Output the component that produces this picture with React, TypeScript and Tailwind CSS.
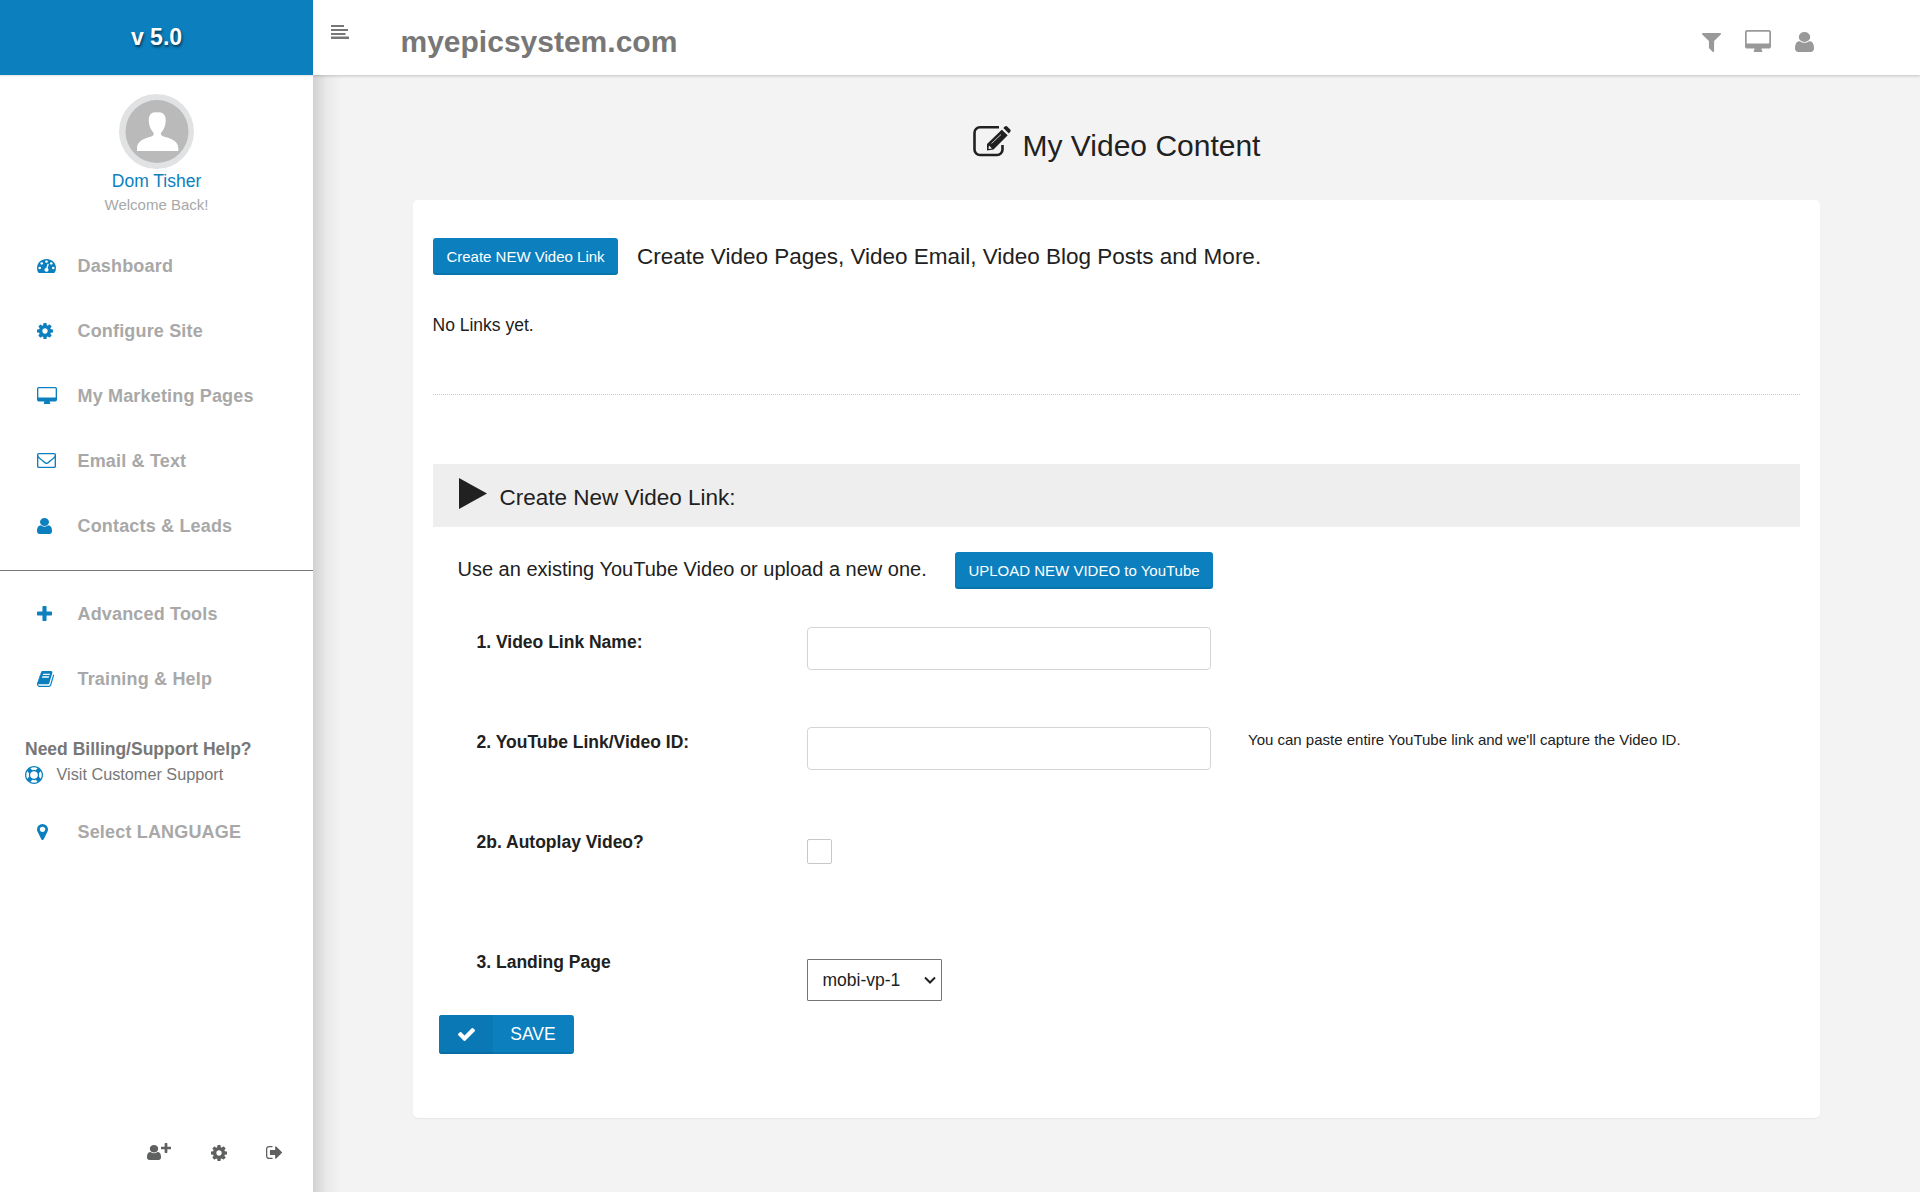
import React from "react";

const ICONS = {
  user: "M1536 1399q0 109-62.5 187t-150.5 78h-854q-88 0-150.5-78t-62.5-187q0-85 8.5-160.5t31.5-152 58.5-131 94-89 134.5-34.5q131 128 313 128t313-128q76 0 134.5 34.5t94 89 58.5 131 31.5 152 8.5 160.5zm-256-887q0 159-112.5 271.5t-271.5 112.5-271.5-112.5-112.5-271.5 112.5-271.5 271.5-112.5 271.5 112.5 112.5 271.5z",
  cog: "M1152 896q0-106-75-181t-181-75-181 75-75 181 75 181 181 75 181-75 75-181zm512-109v222q0 12-8 23t-20 13l-185 28q-19 54-39 91 35 50 107 138 10 12 10 25t-9 23q-27 37-99 108t-94 71q-12 0-26-9l-138-108q-44 23-91 38-16 136-29 186-7 28-36 28h-222q-14 0-24.5-8.5t-11.5-21.5l-28-184q-49-16-90-37l-141 107q-10 9-25 9-14 0-25-11-126-114-165-168-7-10-7-23 0-12 8-23 15-21 51-66.5t54-70.5q-27-50-41-99l-183-27q-13-2-21-12.5t-8-23.5v-222q0-12 8-23t19-13l186-28q14-46 39-92-40-57-107-138-10-12-10-24 0-10 9-23 26-36 98.5-107.5t94.5-71.5q13 0 26 10l138 107q44-23 91-38 16-136 29-186 7-28 36-28h222q14 0 24.5 8.5t11.5 21.5l28 184q49 16 90 37l142-107q9-9 24-9 13 0 25 10 129 119 165 170 7 8 7 22 0 12-8 23-15 21-51 66.5t-54 70.5q26 50 41 98l183 28q13 2 21 12.5t8 23.5z",
  desktop: "M1792 992v-832q0-13-9.5-22.5t-22.5-9.5h-1600q-13 0-22.5 9.5t-9.5 22.5v832q0 13 9.5 22.5t22.5 9.5h1600q13 0 22.5-9.5t9.5-22.5zm128-832v1088q0 66-47 113t-113 47h-544q0 37 16 77.5t32 71 16 43.5q0 26-19 45t-45 19h-512q-26 0-45-19t-19-45q0-14 16-44t32-70 16-78h-544q-66 0-113-47t-47-113v-1088q0-66 47-113t113-47h1600q66 0 113 47t47 113z",
  plus: "M1600 736v192q0 40-28 68t-68 28h-416v416q0 40-28 68t-68 28h-192q-40 0-68-28t-28-68v-416h-416q-40 0-68-28t-28-68v-192q0-40 28-68t68-28h416v-416q0-40 28-68t68-28h192q40 0 68 28t28 68v416h416q40 0 68 28t28 68z",
  marker: "M1152 640q0-106-75-181t-181-75-181 75-75 181 75 181 181 75 181-75 75-181zm256 0q0 109-33 179l-364 774q-16 33-47.5 52t-67.5 19-67.5-19-46.5-52l-365-774q-33-70-33-179 0-212 150-362t362-150 362 150 150 362z",
  filter: "M1595 295q17 41-14 70l-493 493v742q0 42-39 59-13 5-25 5-27 0-45-19l-256-256q-19-19-19-45v-486l-493-493q-31-29-14-70 17-39 59-39h1280q42 0 59 39z",
  check: "M1671 566q0 40-28 68l-724 724-136 136q-28 28-68 28t-68-28l-136-136-362-362q-28-28-28-68t28-68l136-136q28-28 68-28t68 28l294 295 656-657q28-28 68-28t68 28l136 136q28 28 28 68z",
  signOut: "M704 1440q0 4 1 20t.5 26.5-3 23.5-10 19.5-20.5 6.5h-320q-119 0-203.5-84.5t-84.5-203.5v-704q0-119 84.5-203.5t203.5-84.5h320q13 0 22.5 9.5t9.5 22.5q0 4 1 20t.5 26.5-3 23.5-10 19.5-20.5 6.5h-320q-66 0-113 47t-47 113v704q0 66 47 113t113 47h312l11.5 1 11.5 3 8 5.5 7 9 2 13.5zm928-544q0 26-19 45l-544 544q-19 19-45 19t-45-19-19-45v-288h-448q-26 0-45-19t-19-45v-384q0-26 19-45t45-19h448v-288q0-26 19-45t45-19 45 19l544 544q19 19 19 45z",
  envelope: "M1664 1504v-768q-32 36-69 66-268 206-426 338-51 43-83 67t-86.5 48.5-102.5 24.5h-2q-48 0-102.5-24.5t-86.5-48.5-83-67q-158-132-426-338-37-30-69-66v768q0 13 9.5 22.5t22.5 9.5h1472q13 0 22.5-9.5t9.5-22.5zm0-1051v-24.5l-.5-13-3-12.5-5.5-9-9-7.5-14-2.5h-1472q-13 0-22.5 9.5t-9.5 22.5q0 168 147 284 193 152 401 317 6 5 35 29.5t46 37.5 44.5 31.5 50.5 27.5 43 9h2q20 0 43-9t50.5-27.5 44.5-31.5 46-37.5 35-29.5q208-165 401-317 54-43 100.5-115.5t46.5-131.5zm128-37v1088q0 66-47 113t-113 47h-1472q-66 0-113-47t-47-113v-1088q0-66 47-113t113-47h1472q66 0 113 47t47 113z",
  gauge: "M384 1152q0-53-37.5-90.5t-90.5-37.5-90.5 37.5-37.5 90.5 37.5 90.5 90.5 37.5 90.5-37.5 37.5-90.5zm192-448q0-53-37.5-90.5t-90.5-37.5-90.5 37.5-37.5 90.5 37.5 90.5 90.5 37.5 90.5-37.5 37.5-90.5zm428 481l101-382q6-26-7.5-48.5t-38.5-29.5-48 6.5-30 39.5l-101 382q-60 5-107 43.5t-63 98.5q-20 77 20 146t117 89 146-20 89-117q16-60-6-117t-72-91zm660-33q0-53-37.5-90.5t-90.5-37.5-90.5 37.5-37.5 90.5 37.5 90.5 90.5 37.5 90.5-37.5 37.5-90.5zm-640-640q0-53-37.5-90.5t-90.5-37.5-90.5 37.5-37.5 90.5 37.5 90.5 90.5 37.5 90.5-37.5 37.5-90.5zm448 192q0-53-37.5-90.5t-90.5-37.5-90.5 37.5-37.5 90.5 37.5 90.5 90.5 37.5 90.5-37.5 37.5-90.5zm320 448q0 261-141 483-19 29-54 29h-1402q-35 0-54-29-141-221-141-483 0-182 71-348t191-286 286-191 348-71 348 71 286 191 191 286 71 348z",
  book: "M1703 478q40 57 18 129l-275 906q-19 64-76.5 107.5t-122.5 43.5h-923q-77 0-148.5-53.5t-99.5-131.5q-24-67-2-127 0-4 3-27t4-37q1-8-3-21.5t-3-19.5q2-11 8-21t16.5-23.5 16.5-23.5q23-38 45-91.5t30-91.5q3-10 .5-30t-.5-28q3-11 17-28t17-23q21-36 42-92t25-90q1-9-2.5-32t.5-28q4-13 22-30.5t22-22.5q19-26 42.5-84.5t27.5-96.5q1-8-3-25.5t-2-26.5q2-8 9-18t18-23 17-21q8-12 16.5-30.5t15-35 16-36 19.5-32 26.5-23.5 36-11.5 47.5 5.5l-1 3q38-9 51-9h761q74 0 114 56t18 130l-274 906q-36 119-71.5 153.5t-128.5 34.5h-869q-27 0-38 15-11 16-1 43 24 70 144 70h923q29 0 56-15.5t35-41.5l300-987q7-22 5-57 38 15 59 43zm-1064 2q-4 13 2 22.5t20 9.5h608q13 0 25.5-9.5t16.5-22.5l21-64q4-13-2-22.5t-20-9.5h-608q-13 0-25.5 9.5t-16.5 22.5zm-83 256q-4 13 2 22.5t20 9.5h608q13 0 25.5-9.5t16.5-22.5l21-64q4-13-2-22.5t-20-9.5h-608q-13 0-25.5 9.5t-16.5 22.5z",
  lifeRing: "M896 0q182 0 348 71t286 191 191 286 71 348-71 348-191 286-286 191-348 71-348-71-286-191-191-286-71-348 71-348 191-286 286-191 348-71zm0 128q-190 0-361 90l194 194q82-28 167-28t167 28l194-194q-171-90-361-90zm-678 1129l194-194q-28-82-28-167t28-167l-194-194q-90 171-90 361t90 361zm678 407q190 0 361-90l-194-194q-82 28-167 28t-167-28l-194 194q171 90 361 90zm0-384q159 0 271.5-112.5t112.5-271.5-112.5-271.5-271.5-112.5-271.5 112.5-112.5 271.5 112.5 271.5 271.5 112.5zm484-217l194 194q90-171 90-361t-90-361l-194 194q28 82 28 167t-28 167z",
};

/* Each view box is cropped to the glyph, so the class sizes are the drawn sizes. */
const BOXES: Record<keyof typeof ICONS, string> = {
  user: "256 128 1280 1536",
  cog: "128 128 1536 1536",
  desktop: "0 0 1920 1664",
  plus: "192 128 1408 1408",
  marker: "384 128 1024 1536",
  filter: "192 256 1408 1408",
  check: "121 334 1550 1188",
  signOut: "64 256 1568 1280",
  envelope: "0 256 1792 1408",
  gauge: "0 256 1792 1408",
  book: "64 128 1664 1536",
  lifeRing: "0 0 1792 1792",
};

function Icon({ name, className }: { name: keyof typeof ICONS; className: string }) {
  return (
    <svg viewBox={BOXES[name]} preserveAspectRatio="none" fill="currentColor" className={`shrink-0 ${className}`}>
      <path d={ICONS[name]} />
    </svg>
  );
}

function NavItem({ name, size, label }: { name: keyof typeof ICONS; size: string; label: string }) {
  return (
    <a className="flex h-[65px] items-center pl-[37px]">
      <span className="flex w-[40.500px] items-center text-[#0c80bf]">
        <Icon name={name} className={size} />
      </span>
      <span className="pt-[2px] text-[18px] font-bold tracking-[0.17px] text-[#a8a8a8]">{label}</span>
    </a>
  );
}

function Sidebar() {
  return (
    <aside className="relative z-20 flex w-[313px] shrink-0 flex-col bg-white">
      <div className="flex h-[75px] shrink-0 items-center justify-center bg-[#0c80bf] text-[23px] font-bold text-white [text-shadow:1px_2px_3px_rgba(0,0,0,0.6)]">
        v 5.0
      </div>
      <div className="flex h-[158px] flex-col items-center pt-[19px] shadow-[inset_0_2px_2px_-1px_rgba(0,0,0,0.12)]">
        <svg viewBox="0 0 75 75" className="size-[75px]">
          <circle cx="37.5" cy="37.5" r="37.5" fill="#e0e2e4" />
          <circle cx="38" cy="37.5" r="31.5" fill="#bababa" />
          <path
            d="M38 18.500c5.500-.8 8.700 2 8.700 8 0 5-1.700 9-4.400 12-1.200 2 0 3.200 3 4.200 8 1.800 14 5 14 11.500V57H18v-2.800c0-6.500 6-9.700 13.500-11.500 3-1 4-2.200 2.800-4.200-2.700-3-4.500-7-4.500-12 0-6 3-8.800 8.200-8z"
            fill="#fff"
          />
        </svg>
        <div className="text-[17.500px] leading-[24px] text-[#0c80bf]">Dom Tisher</div>
        <div className="text-[15px] leading-[24px] text-[#a8a8a8]">Welcome Back!</div>
      </div>
      <nav className="flex h-[338px] flex-col border-b border-[#777]">
        <NavItem name="gauge" size="h-[14px] w-[19px]" label="Dashboard" />
        <NavItem name="cog" size="size-4" label="Configure Site" />
        <NavItem name="desktop" size="h-[17px] w-5" label="My Marketing Pages" />
        <NavItem name="envelope" size="h-[15px] w-[19px]" label="Email & Text" />
        <NavItem name="user" size="h-4 w-[15px]" label="Contacts & Leads" />
      </nav>
      <nav className="mt-[10px] flex flex-col">
        <NavItem name="plus" size="size-[15px]" label="Advanced Tools" />
        <NavItem name="book" size="h-4 w-[17px]" label="Training & Help" />
      </nav>
      <div className="mt-[25px] pl-[25px] text-[#777]">
        <div className="text-[17.500px] leading-[26px] font-bold">Need Billing/Support Help?</div>
        <div className="flex h-[26px] items-center leading-[24px]">
          <Icon name="lifeRing" className="size-[18px] text-[#0c80bf]" />
          <span className="ml-[13.500px] pb-[2px] text-[16.250px]">Visit Customer Support</span>
        </div>
      </div>
      <div className="mt-[11px]">
        <NavItem name="marker" size="h-4 w-[11px]" label="Select LANGUAGE" />
      </div>
      <div className="mt-auto flex h-[50px] shrink-0 items-start pl-[147px] text-[#5f6060]">
        <span className="flex w-16 items-start">
          <Icon name="user" className="mt-[3px] h-[15px] w-[14px]" />
          <Icon name="plus" className="mt-px size-[10px]" />
        </span>
        <span className="w-[55px] pt-[3px]">
          <Icon name="cog" className="size-4" />
        </span>
        <Icon name="signOut" className="mt-1 h-[13px] w-4" />
      </div>
    </aside>
  );
}

function TopBar() {
  return (
    <header className="relative z-10 flex h-[75px] shrink-0 bg-white shadow-[0_1px_3px_rgba(0,0,0,0.2)]">
      <svg viewBox="0 0 18 15" fill="#777" className="mt-[24px] ml-[18px] h-[15px] w-[18px]">
        <rect y="1" width="13" height="2" />
        <rect y="5" width="17" height="2" />
        <rect y="9" width="14.500" height="2" />
        <rect y="12.500" width="18" height="2.500" />
      </svg>
      <h1 className="mt-[22px] ml-[51.500px] text-[30px] leading-[40px] font-bold text-[#777]">myepicsystem.com</h1>
      <div className="mr-[106px] ml-auto flex text-[#999]">
        <Icon name="filter" className="mt-[33px] h-[19px] w-[19px]" />
        <Icon name="desktop" className="mt-[30px] ml-[24px] h-[22px] w-[26px]" />
        <Icon name="user" className="mt-[32px] ml-[24px] h-5 w-[19px]" />
      </div>
    </header>
  );
}

const button = "flex items-center justify-center rounded-[3px] bg-[#0c80bf] text-white shadow-[inset_0_-2px_0_rgba(0,0,0,0.09)]";

function FormRow({ label, height, children }: { label: string; height: string; children: React.ReactNode }) {
  return (
    <div className={`flex items-start pl-[43.500px] ${height}`}>
      <label className="w-[330.500px] shrink-0 pt-[3px] text-[17.500px] leading-[24px] font-bold">{label}</label>
      {children}
    </div>
  );
}

export default function App() {
  return (
    <div className="flex h-[1192px] w-[1920px] overflow-hidden bg-[#f3f3f3] font-['Liberation_Sans',Arial,sans-serif] text-[#212121]">
      <Sidebar />
      <div className="relative flex min-w-0 flex-1 flex-col">
        <TopBar />
        <div className="absolute top-[75px] bottom-0 left-0 w-7 bg-linear-to-r from-black/14 via-black/4 to-transparent" />
        <main className="pr-[100px] pl-[100px]">
          <div className="flex h-[125px] justify-center">
            <svg viewBox="0 0 38 32" className="mt-[50px] h-8 w-[38px]" fill="none" stroke="currentColor">
              <path d="M26 2.200H7a5.500 5.500 0 0 0-5.500 5.500v16.800a5.500 5.500 0 0 0 5.500 5.500h17a5.500 5.500 0 0 0 5.500-5.500V20" strokeWidth="2.600" />
              <path d="M14 25.500V19L29 4.500l6 5.500L20.500 24.500z" fill="currentColor" stroke="none" />
              <path d="M30.300 3l1.500-1.500q1.200-1 2.400 0l3 3q1 1.200 0 2.300L35.800 8.500z" fill="currentColor" stroke="none" />
              <path d="M28.800 3.700L35.600 10.200" stroke="#f3f3f3" strokeWidth="1.200" />
              <path d="M18.500 18.500L28 9.500" stroke="#f3f3f3" strokeWidth=".8" />
              <path d="M16 20.500l3 3-3.500.5z" fill="#f3f3f3" stroke="none" />
            </svg>
            <h2 className="mt-[51px] ml-3 text-[30px] leading-[40px]">My Video Content</h2>
          </div>
          <section className="h-[918px] w-[1407px] rounded-[5px] bg-white px-5 pt-[38px] shadow-[0_1px_1px_rgba(0,0,0,0.05)]">
            <div className="flex h-[37px] items-start">
              <button className={`${button} h-[37px] w-[185px] pt-px text-[15px]`}>Create NEW Video Link</button>
              <p className="ml-[19px] text-[22.500px] leading-[37px]">Create Video Pages, Video Email, Video Blog Posts and More.</p>
            </div>
            <p className="mt-[37px] -ml-[0.500px] text-[17.500px] leading-[26px]">No Links yet.</p>
            <div className="mt-[56px] border-t border-dotted border-[#ccc]" />
            <div className="mt-[69px] flex h-[63px] bg-[#eee] pl-[26px]">
              <svg viewBox="0 0 28 31" className="mt-[14px] h-[31px] w-7" fill="currentColor">
                <path d="M0 0L28 15.500L0 31z" />
              </svg>
              <h3 className="mt-[18px] ml-[12.500px] text-[22.500px] leading-[32px]">Create New Video Link:</h3>
            </div>
            <div className="mt-[25px] flex pl-[24.500px]">
              <p className="w-[497.500px] text-[20px] leading-[34px]">Use an existing YouTube Video or upload a new one.</p>
              <button className={`${button} h-[37px] w-[258px] pt-px text-[15px]`}>UPLOAD NEW VIDEO to YouTube</button>
            </div>
            <div className="mt-[38px]">
              <FormRow label="1. Video Link Name:" height="h-[100px]">
                <input className="h-[43px] w-[404px] rounded-[4px] border border-[#d5d5d5] px-3" />
              </FormRow>
              <FormRow label="2. YouTube Link/Video ID:" height="h-[100px]">
                <input className="h-[43px] w-[404px] rounded-[4px] border border-[#d5d5d5] px-3" />
                <p className="ml-[37px] text-[15px] leading-[26px]">You can paste entire YouTube link and we&apos;ll capture the Video ID.</p>
              </FormRow>
              <FormRow label="2b. Autoplay Video?" height="h-[120px]">
                <span className="mt-[12px] size-[25px] rounded-[2px] border border-[#c8c8c8]" />
              </FormRow>
              <FormRow label="3. Landing Page" height="h-[68px]">
                <div className="mt-[12px] flex h-[42px] w-[135px] items-center justify-between rounded-[1px] border border-[#767676] pr-[5px] pl-[14.500px] text-[17.500px]">
                  mobi-vp-1
                  <svg viewBox="0 0 12 8" className="h-2 w-3" fill="none" stroke="currentColor" strokeWidth="2">
                    <path d="M1 1.500L6 6.500L11 1.500" />
                  </svg>
                </div>
              </FormRow>
            </div>
            <button className="ml-[6px] flex h-[39px] w-[135px] overflow-hidden rounded-[3px] bg-[#0c80bf] text-[17.500px] text-white">
              <span className="flex h-full w-[54px] items-center justify-center bg-[#0a78b4] shadow-[inset_0_-2px_0_rgba(0,0,0,0.09)]">
                <Icon name="check" className="h-[13px] w-[17px]" />
              </span>
              <span className="flex h-full flex-1 items-center justify-center pr-px shadow-[inset_0_-2px_0_rgba(0,0,0,0.09)]">SAVE</span>
            </button>
          </section>
        </main>
      </div>
    </div>
  );
}
